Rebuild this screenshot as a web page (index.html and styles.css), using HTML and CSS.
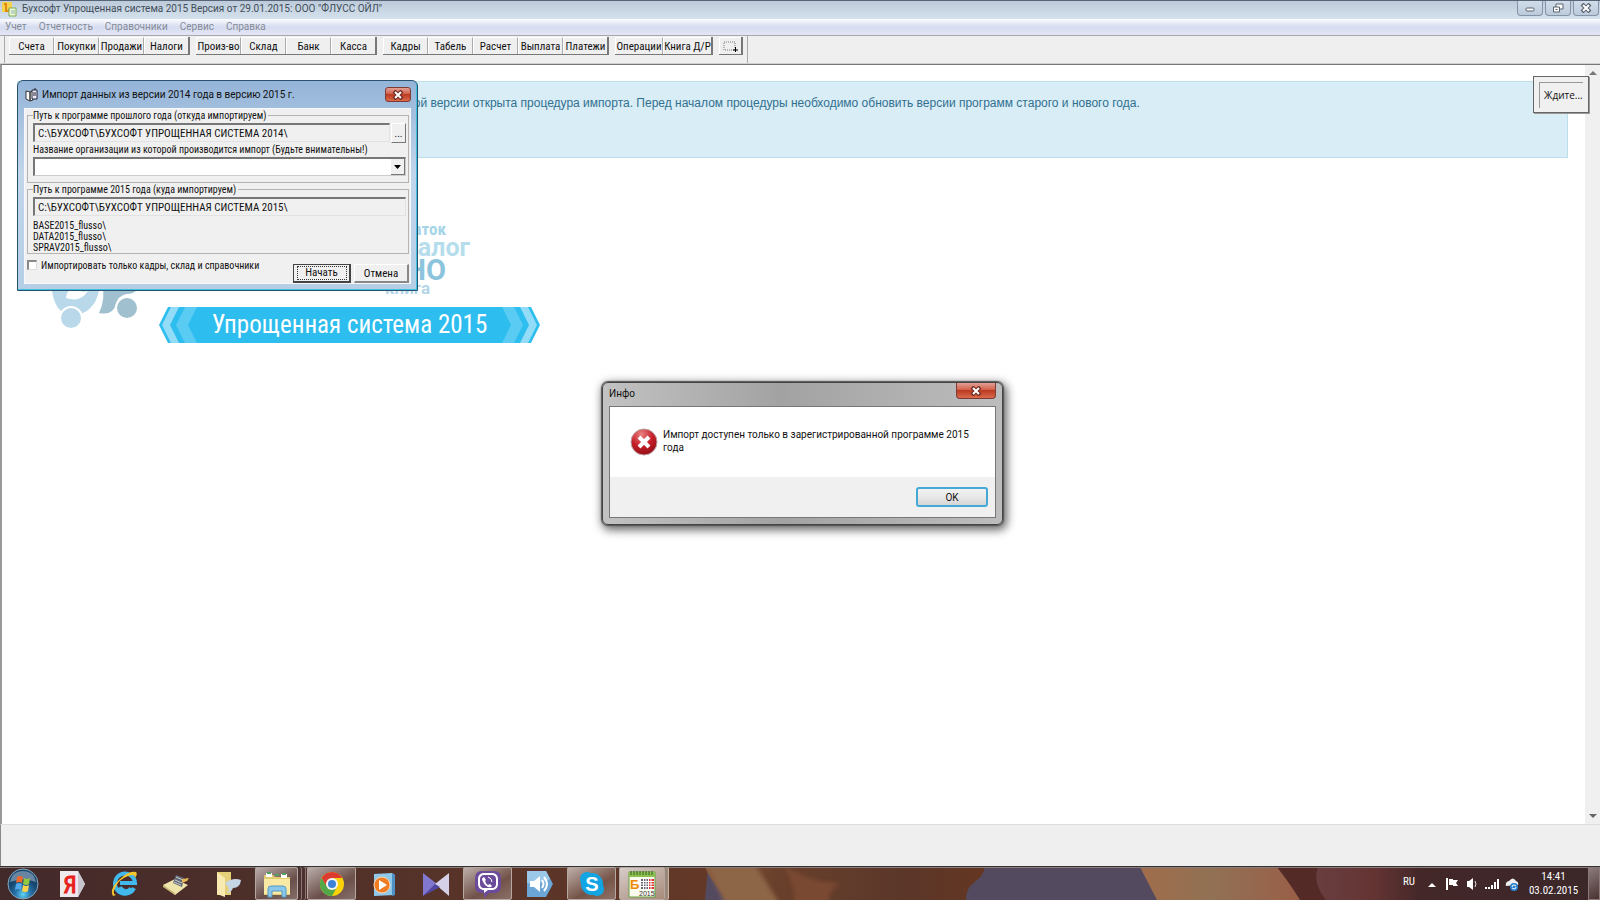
FILE: index.html
```html
<!DOCTYPE html>
<html lang="ru">
<head>
    <meta charset="UTF-8">
    <meta name="viewport" content="width=device-width, initial-scale=1.0">
    <title>Бухсофт Упрощенная система 2015</title>
    <link rel="stylesheet" href="styles.css">
</head>
<body>
    <header class="titlebar">
        <svg class="app-icon" viewBox="0 0 16 16">
            <path d="M1 1h10v10H1z" fill="#f6d24a"/>
            <path d="M3 3h2v7h3V8" fill="none" stroke="#e08a10" stroke-width="2"/>
            <path d="M8 7h7v8H8z" fill="#eef6dc" stroke="#7fae4c"/>
            <path d="M10 10h4M10 12h4" stroke="#8fb7a0"/>
        </svg>
        <span class="title">Бухсофт Упрощенная система 2015 Версия от 29.01.2015: ООО "ФЛУСС ОЙЛ"</span>
        <div class="window-buttons">
            <button aria-label="Свернуть"><svg viewBox="0 0 12 10"><rect x="2" y="5" width="8" height="3" rx="1" fill="#fff" stroke="#59636e"/></svg></button>
            <button aria-label="Восстановить"><svg viewBox="0 0 12 10"><path d="M4 1h7v5H4z" fill="#fff" stroke="#59636e"/><path d="M1.500 4h6v5h-6z" fill="#fff" stroke="#59636e"/><path d="M3.500 6h2v1h-2z" fill="#59636e"/></svg></button>
            <button aria-label="Закрыть"><svg viewBox="0 0 12 10"><path d="M2 1l8 8M10 1L2 9" stroke="#59636e" stroke-width="4"/><path d="M3 2l6 6M9 2L3 8" stroke="#fff" stroke-width="2"/></svg></button>
        </div>
    </header>

    <nav class="menu">
        <a href="#">Учет</a>
        <a href="#">Отчетность</a>
        <a href="#">Справочники</a>
        <a href="#">Сервис</a>
        <a href="#">Справка</a>
    </nav>

    <div class="toolbar">
        <div class="group">
            <button>Счета</button><button>Покупки</button><button>Продажи</button><button>Налоги</button>
        </div>
        <div class="group">
            <button>Произ-во</button><button>Склад</button><button>Банк</button><button>Касса</button>
        </div>
        <div class="group">
            <button>Кадры</button><button>Табель</button><button>Расчет</button><button>Выплата</button><button>Платежи</button>
        </div>
        <div class="group wide">
            <button>Операции</button><button>Книга Д/Р</button>
        </div>
        <div class="group single">
            <button aria-label="Выделить"><svg viewBox="0 0 18 14"><path d="M2 3h11v8H2z" fill="none" stroke="#777" stroke-dasharray="1 1"/><path d="M11 11h5M13.500 8v5" stroke="#000"/></svg></button>
        </div>
    </div>

    <main class="workspace">
        <div class="page">
            <div class="notice">Для пользователей новой версии открыта процедура импорта. Перед началом процедуры необходимо обновить версии программ старого и нового года.</div>
            <div class="logo">
                <svg class="figures" viewBox="0 0 110 120">
                    <path d="M2 65q14 14 34 8h24q-2 28-24 32-20 2-24-24Q4 78 2 65z" fill="#b9d9ea"/>
                    <path d="M62 70h38q0 14-14 14-8 2-10 10-3 12-17 9 7-14 3-33z" fill="#a0c0d0"/>
                    <path d="M26 88q0-9 10-9 6 4 12 2-8 12-22 7z" fill="#fff"/>
                    <circle cx="31" cy="108" r="12" fill="#fff"/>
                    <circle cx="31" cy="108" r="10" fill="#b9d9ea"/>
                    <circle cx="87" cy="98" r="12" fill="#fff"/>
                    <circle cx="87" cy="98" r="10" fill="#a0c0d0"/>
                </svg>
                <div class="words">
                    <span class="w-rest">остаток</span>
                    <span class="w-tax">налог</span>
                    <span class="w-no">НО</span>
                    <span class="w-book">книга</span>
                </div>
            </div>
            <div class="banner">
                <svg viewBox="0 0 381 36" preserveAspectRatio="none">
                    <path d="M9 0h363l9 18-9 18H9L0 18z" fill="#2dbdee"/>
                    <path d="M12 0h8l-9 18 9 18h-8L3 18zM369 0h-8l9 18-9 18h8l9-18z" fill="#93dcf8"/>
                    <path d="M26 0h12l-9 18 9 18H26l-9-18zM355 0h-12l9 18-9 18h12l9-18z" fill="#5accf3"/>
                </svg>
                <span>Упрощенная система 2015</span>
            </div>
        </div>
        <div class="scrollbar">
            <svg viewBox="0 0 8 5"><path d="M0 5l4-4 4 4z" fill="#777"/></svg>
            <svg viewBox="0 0 8 5"><path d="M0 0h8L4 4z" fill="#666"/></svg>
        </div>

        <div class="wait"><span>Ждите...</span></div>

        <form class="import-dialog">
            <div class="dialog-title">
                <svg viewBox="0 0 14 14">
                    <path d="M1 3l4 1v9L1 11zM5 4l3-1v9l-3 1z" fill="#fff" stroke="#333"/>
                    <path d="M7 2h5v9H7z" fill="#eef" stroke="#223"/>
                    <path d="M8 5h3M8 7h3M9 1h2" stroke="#223"/>
                </svg>
                <span>Импорт данных из версии 2014 года в версию 2015 г.</span>
                <button type="button" class="close" aria-label="Закрыть"><svg viewBox="0 0 12 10"><path d="M2 1l8 8M10 1L2 9" stroke="#6e2820" stroke-width="4"/><path d="M3 2l6 6M9 2L3 8" stroke="#fff" stroke-width="2"/></svg></button>
            </div>
            <div class="import-body">
                <fieldset class="source">
                    <legend>Путь к программе прошлого года (откуда импортируем)</legend>
                    <div class="path-row">
                        <input class="path" type="text" aria-label="Путь к программе прошлого года" value="C:\БУХСОФТ\БУХСОФТ УПРОЩЕННАЯ СИСТЕМА 2014\" readonly>
                        <button type="button" class="browse">...</button>
                    </div>
                    <label for="org">Название организации из которой производится импорт (Будьте внимательны!)</label>
                    <div class="combo">
                        <select id="org"><option></option></select>
                        <svg viewBox="0 0 13 15"><path d="M3 6h7l-3.500 4z" fill="#000"/></svg>
                    </div>
                </fieldset>
                <fieldset class="target">
                    <legend>Путь к программе 2015 года (куда импортируем)</legend>
                    <input class="path" type="text" aria-label="Путь к программе 2015 года" value="C:\БУХСОФТ\БУХСОФТ УПРОЩЕННАЯ СИСТЕМА 2015\" readonly>
                    <div class="folders">BASE2015_flusso\<br>DATA2015_flusso\<br>SPRAV2015_flusso\</div>
                </fieldset>
                <div class="import-footer">
                    <input type="checkbox" id="only">
                    <label for="only">Импортировать только кадры, склад и справочники</label>
                    <button type="button" class="start"><span>Начать</span></button>
                    <button type="button" class="cancel">Отмена</button>
                </div>
            </div>
        </form>

        <div class="info-dialog" role="alertdialog">
            <div class="dialog-title">
                <span>Инфо</span>
                <button class="close" aria-label="Закрыть"><svg viewBox="0 0 12 10"><path d="M2 1l8 8M10 1L2 9" stroke="#6e2820" stroke-width="4"/><path d="M3 2l6 6M9 2L3 8" stroke="#fff" stroke-width="2"/></svg></button>
            </div>
            <div class="info-body">
                <div class="message">
                    <svg viewBox="0 0 28 28">
                        <defs><radialGradient id="red" cx=".4" cy=".2" r=".9"><stop offset="0" stop-color="#e98080"/><stop offset=".5" stop-color="#c51f28"/><stop offset="1" stop-color="#8c0a14"/></radialGradient></defs>
                        <circle cx="14" cy="14" r="13" fill="url(#red)" stroke="#b9a0a0"/>
                        <path d="M9 9l10 10M19 9L9 19" stroke="#fff" stroke-width="4"/>
                    </svg>
                    <p>Импорт доступен только в зарегистрированной программе 2015 года</p>
                </div>
                <div class="actions"><button>OK</button></div>
            </div>
        </div>
    </main>

    <div class="statusbar"></div>

    <footer class="taskbar">
        <svg class="wallpaper" viewBox="0 0 1600 34" preserveAspectRatio="none">
            <defs>
                <linearGradient id="left"><stop offset="0" stop-color="#42292a"/><stop offset=".4" stop-color="#4f302a"/><stop offset="1" stop-color="#633827"/></linearGradient>
                <linearGradient id="tan"><stop offset="0" stop-color="#a06d4b"/><stop offset=".4" stop-color="#917154"/><stop offset="1" stop-color="#9b5a45"/></linearGradient>
                <linearGradient id="right"><stop offset="0" stop-color="#6c4448"/><stop offset=".3" stop-color="#643433"/><stop offset=".45" stop-color="#432729"/><stop offset="1" stop-color="#3b2729"/></linearGradient>
                <linearGradient id="mid"><stop offset="0" stop-color="#8b5a3d"/><stop offset=".25" stop-color="#69402b"/><stop offset=".7" stop-color="#5b372a"/><stop offset="1" stop-color="#643621"/></linearGradient>
                <filter id="soft" x="0" y="0" width="1" height="1"><feGaussianBlur stdDeviation="2"/></filter>
            </defs>
            <path d="M0 0h1600v34H0z" fill="#544a60"/>
            <path d="M0 0h708l-3 34H0z" fill="url(#left)"/>
            <path d="M705 0h280q-2 10-11 16-8 6-8 18H728q-16-18-23-34z" fill="url(#mid)"/>
            <g filter="url(#soft)">
                <path d="M705-6h48l28 46h-55z" fill="#8d6547"/>
                <path d="M780-6q20 20 60 23-14 8-10 23h-35q0-26-15-46z" fill="#7a4a31"/>
            </g>
            <path d="M1140 0h180v34h-163z" fill="url(#tan)"/>
            <path d="M1277 0h323v34h-298z" fill="url(#right)"/>
            <path d="M1277 0h41q-6 16 8 34h-26q-12-20-23-34z" fill="#532a25"/>
        </svg>
        <div class="tasks">
            <button class="start-orb" aria-label="Пуск"><svg viewBox="0 0 32 32">
                <defs><radialGradient id="orb" cy=".85"><stop offset="0" stop-color="#5ed5f5"/><stop offset=".5" stop-color="#2874ab"/><stop offset="1" stop-color="#17466f"/></radialGradient></defs>
                <circle cx="16" cy="16" r="15" fill="url(#orb)" stroke="#86a9bd"/>
                <path d="M3 14Q5 3 16 3t13 11q-13-5-26 0z" fill="#fff" opacity=".35"/>
                <path d="M10 9q3-2 6 0l-1 6q-3-2-6 0z" fill="#f0672c"/><path d="M17 10q3 2 6 0l-1 6q-3 2-6 0z" fill="#92c83e"/>
                <path d="M9 16q3-2 6 0l-1 6q-3-2-6 0z" fill="#52a8e8"/><path d="M16 17q3 2 6 0l-1 6q-3 2-6 0z" fill="#fdd24a"/>
            </svg></button>
            <button aria-label="Яндекс"><svg viewBox="0 0 28 28"><path d="M2 1h18l7 13-7 13H2z" fill="#eee9ec"/><path d="M20 1l7 13-7 13z" fill="#c9c5cc"/><text x="12" y="23" text-anchor="middle" class="ya">Я</text></svg></button>
            <button aria-label="Internet Explorer"><svg viewBox="0 0 28 28">
                <path d="M24 18a10 10 0 1 1 1-5H10M10 17q2 5 7 4 3 0 4-3" fill="none" stroke="#42b9ec" stroke-width="4"/>
                <path d="M3 26q-4-7 6-16Q19 0 26 2q2 2-1 6 0-5-7-2Q9 9 5 18q-3 6 1 7z" fill="#f7c52c"/>
            </svg></button>
            <button aria-label="Документы"><svg viewBox="0 0 28 28"><path d="M1 15l12-6 13 6-13 10z" fill="#efe4ac"/><path d="M1 15l12 8v2L1 17z" fill="#c9b978"/><path d="M14 5l8 3-2 9-9-4z" fill="#626873"/><path d="M14 7l7 3M13 10l7 3M12 12l7 3" stroke="#c8ccd4"/><path d="M20 9l7-1-2 3-5 2z" fill="#e7b65a"/></svg></button>
            <button aria-label="Папка"><svg viewBox="0 0 28 28"><path d="M3 2h14v23H3z" fill="#e6cf79"/><path d="M3 2l8 6v19l-8-3z" fill="#f8eab0"/><path d="M11 13q8-6 16-3-1 8-8 8-2 5-6 5 3-3 1-6z" fill="#c5d7e4"/></svg></button>
            <button class="open stack" aria-label="Проводник"><svg viewBox="0 0 28 28"><path d="M1 5h9l2 2h15v18H1z" fill="#e2cb70"/><path d="M3 3h6v4H3zM18 4h6v4h-6z" fill="#fff"/><path d="M4 3h4M12 5h4M19 4h4" stroke="#50a060" stroke-width="2"/><path d="M1 9h26v15H1z" fill="#f8e9a4"/><path d="M5 27v-8q0-3 3-3h12q3 0 3 3v8h-4v-6H9v6z" fill="#8ac8eb" stroke="#5699c4"/></svg></button>
            <button class="open" aria-label="Chrome"><svg viewBox="0 0 28 28"><circle cx="14" cy="14" r="12" fill="#fbd20a"/><path d="M3.600 8A12 12 0 0 1 24.400 8H14z" fill="#dc3b30"/><path d="M14 8H3.600l5.200 9z" fill="#dc3b30"/><path d="M3.600 8A12 12 0 0 0 14 26l5-9-10 0z" fill="#52a849"/><circle cx="14" cy="14" r="6" fill="#f4f4f4"/><circle cx="14" cy="14" r="4" fill="#3e82d8"/></svg></button>
            <button aria-label="Проигрыватель"><svg viewBox="0 0 28 28"><path d="M4 4l18-1 3 2v20l-21 1z" fill="#8fc8e9"/><path d="M22 3l3 2v20l-3 1z" fill="#4e91c4"/><circle cx="12" cy="15" r="8" fill="#ef7d24" stroke="#fbd6b4"/><path d="M9 10l8 5-8 5z" fill="#fff"/></svg></button>
            <button aria-label="Плеер"><svg viewBox="0 0 28 28"><path d="M1 3l14 11L1 26z" fill="#8277ce"/><path d="M27 3L13 14l14 12z" fill="#d5cfe8"/><path d="M1 26l12-12 5 3z" fill="#5346a3"/></svg></button>
            <button class="open" aria-label="Viber"><svg viewBox="0 0 28 28"><path d="M7 1h14q6 1 6 7v8q0 6-6 7h-6l-5 5v-5H7q-6-1-6-7V8q0-6 6-7z" fill="#6b4b9c"/><path d="M9 3h10q5 1 5 6v5q0 5-5 6h-5l-4 3v-3H9q-5-1-5-6V9q0-5 5-6z" fill="#fff"/><path d="M9 5h10q3 1 3 4v5q0 3-3 4H9q-3-1-3-4V9q0-3 3-4z" fill="#6b4b9c"/><path d="M10 7l2 3-1 1q1 3 3 4l2-1 2 2q-1 2-4 1-5-3-6-8 0-1 2-2z" fill="#fff"/><path d="M14 7q4 1 4 5" fill="none" stroke="#fff"/></svg></button>
            <button aria-label="Звук"><svg viewBox="0 0 28 28"><path d="M1 1h19l7 13-7 13H1z" fill="#6ba6d6"/><path d="M1 1h19l4 8Q12 15 1 13z" fill="#9bc8e8"/><path d="M4 11h4l6-5v16l-6-5H4z" fill="#fff"/><path d="M16 10q3 4 0 8M18 7q6 7 0 14" fill="none" stroke="#fff" stroke-width="2"/></svg></button>
            <button class="open" aria-label="Skype"><svg viewBox="0 0 28 28"><circle cx="14" cy="14" r="11" fill="#12a5e4"/><circle cx="9" cy="9" r="7" fill="#12a5e4"/><circle cx="19" cy="19" r="7" fill="#12a5e4"/><text x="14" y="21" text-anchor="middle" class="sk">S</text></svg></button>
            <button class="open active" aria-label="Бухсофт"><svg viewBox="0 0 28 28"><path d="M1 2h26v25H1z" fill="#fbfbf0" stroke="#67a043"/><path d="M1 2h26v5H1z" fill="#8cc152"/><path d="M3 1v4M6 1v4M9 1v4M12 1v4M15 1v4M18 1v4M21 1v4M24 1v4" stroke="#375e21"/><text x="2" y="19" class="bs">Б</text><path d="M13 9h8v10h-8z" fill="#667"/><path d="M21 9h5v10h-5z" fill="#d33"/><path d="M12 11.500h14M12 14h14M12 16.500h14M15.500 9v10M18 9v10M20.500 9v10M23 9v10" stroke="#fff"/><text x="11" y="26" class="yr">2015</text></svg></button>
        </div>
        <div class="tray">
            <span class="lang">RU</span>
            <svg viewBox="0 0 14 14"><path d="M3 10l4-4 4 4z" fill="#fff"/></svg>
            <svg viewBox="0 0 14 14"><path d="M2 1v12" stroke="#fff" stroke-width="2"/><path d="M4 2h4v1h5l-2 3 2 3H8V8H4z" fill="#fff"/></svg>
            <svg viewBox="0 0 14 14"><path d="M2 4h2l4-3v12l-4-3H2z" fill="#fff"/><path d="M10 4q2 3 0 6" fill="none" stroke="#ddd"/></svg>
            <svg viewBox="0 0 14 14"><path d="M1 12v-2M4 12v-2M7 12V8M10 12V5M13 12V2" stroke="#fff" stroke-width="2"/></svg>
            <svg viewBox="0 0 14 14"><path d="M1 9q-1-4 3-5 4-5 7 0 3 1 2 4z" fill="#eee"/><circle cx="9" cy="10" r="4" fill="#287fd0"/><path d="M7 10q0-2 2-2l2 1M11 10q0 2-2 2l-2-1" fill="none" stroke="#fff"/></svg>
            <div class="clock"><span>14:41</span><span>03.02.2015</span></div>
            <button class="show-desktop" aria-label="Показать рабочий стол"></button>
        </div>
    </footer>
</body>
</html>
```
FILE: styles.css
```css
* {
    box-sizing: border-box;
}
body {
    margin: 0;
    height: 100vh;
    display: flex;
    flex-direction: column;
    overflow: hidden;
    background: #efefef;
    font-family: "Roboto Condensed", "Liberation Sans Narrow", sans-serif;
    font-size: 11px;
    color: #111;
}
button, input, select {
    font: inherit;
    color: inherit;
    padding: 0;
    margin: 0;
}
button {
    display: flex;
    align-items: center;
    justify-content: center;
    border: none;
    background: none;
    white-space: nowrap;
}
svg {
    display: block;
    flex: none;
}

/* main window frame */
.titlebar {
    display: flex;
    height: 19px;
    flex: none;
    gap: 5px;
    padding-left: 1px;
    border-top: 1px solid #566578;
    background: linear-gradient(#bccada, #d5e2ed);
    font: 10px/16px Roboto, sans-serif;
    color: #414c58;
}
.app-icon {
    width: 16px;
    height: 16px;
}
.title {
    flex: 1;
}
.window-buttons {
    display: flex;
    gap: 2px;
    padding-right: 1px;
}
.window-buttons button {
    width: 26px;
    height: 15px;
    border: 1px solid #8494a6;
    border-top: none;
    border-radius: 0 0 4px 4px;
    background: linear-gradient(#d1dce8, #bccbdc);
}
.window-buttons svg, .close svg {
    width: 12px;
    height: 10px;
}
.menu {
    display: flex;
    flex: none;
    gap: 12px;
    height: 16px;
    padding-left: 5px;
    background: linear-gradient(#fbfcfe, #d5dcf0 50%, #e4e6f4);
    font: 10px/15px Roboto, sans-serif;
}
.menu a {
    color: #858b98;
    text-decoration: none;
}
.toolbar {
    display: flex;
    flex: none;
    gap: 6px;
    align-items: flex-start;
    height: 29px;
    padding: 1px 0 0 9px;
    border-top: 1px solid #a6a8b0;
    border-bottom: 1px solid #d0d0d0;
    background: linear-gradient(90deg, transparent 4px, #aaa 4px, #aaa 5px, transparent 5px, transparent 747px, #aaa 747px, #aaa 748px, transparent 748px);
}
.group {
    display: flex;
    border-right: 2px solid #777;
    border-bottom: 1px solid #777;
}
.group button {
    width: 45px;
    height: 17px;
    border-top: 1px solid #fff;
    border-left: 1px solid #fff;
    border-right: 1px solid #aaa;
}
.group button:last-child {
    width: 44px;
    border-right: none;
}
.group.wide button {
    width: 48px;
}
.group.single button {
    width: 22px;
}
.group svg {
    width: 18px;
    height: 14px;
}

/* working area */
.workspace {
    position: relative;
    flex: 1;
    min-height: 0;
    display: flex;
    border-top: 1px solid #777;
    border-left: 2px solid #999;
    background: #fff;
}
.page {
    flex: 1;
    padding: 16px 17px 0 15px;
}
.notice {
    height: 77px;
    padding: 13px 0 0 15px;
    border: 1px solid #bcdfeb;
    background: #d9edf7;
    color: #31708f;
    font: 12px/16px "Liberation Sans", Arial, sans-serif;
    white-space: nowrap;
    text-indent: 250px;
}
.logo {
    display: flex;
    gap: 220px;
    height: 149px;
    padding: 52px 0 0 23px;
}
.figures {
    width: 110px;
    height: 120px;
}
.words {
    display: flex;
    flex-direction: column;
    width: 100px;
    padding-top: 10px;
    font-family: Roboto, sans-serif;
    font-weight: bold;
    color: #a5d5e8;
}
.w-rest {
    align-self: flex-end;
    padding-right: 24px;
    font-family: "Roboto Condensed", sans-serif;
    font-size: 17px;
    line-height: 18px;
}
.w-tax {
    align-self: flex-end;
    font-size: 25px;
    line-height: 20px;
    color: #b5ddec;
}
.w-no {
    align-self: flex-end;
    padding-right: 24px;
    font-size: 29px;
    line-height: 24px;
    color: #8dc4dd;
}
.w-book {
    padding-left: 15px;
    font-size: 17px;
    line-height: 12px;
    color: #b5d5e8;
}
.banner {
    position: relative;
    width: 381px;
    height: 36px;
    margin-left: 142px;
    color: #fff;
    font: 25px/36px "Roboto Condensed", "Liberation Sans Narrow", sans-serif;
    text-align: center;
    white-space: nowrap;
}
.banner svg {
    position: absolute;
    width: 100%;
    height: 100%;
}
.banner span {
    position: relative;
}
.scrollbar {
    width: 15px;
    display: flex;
    flex-direction: column;
    justify-content: space-between;
    align-items: center;
    padding: 5px 0;
    background: #f0f0f0;
}
.scrollbar svg {
    width: 8px;
    height: 5px;
}
.wait {
    position: absolute;
    top: 11px;
    right: 11px;
    width: 56px;
    height: 37px;
    padding: 5px;
    border: 1px solid #666;
    background: #f0f0f0;
    box-shadow: 1px 1px 0 #999;
    font: 10px/25px "Open Sans", sans-serif;
}
.wait span {
    display: block;
    padding-left: 4px;
    border-top: 1px solid #999;
    border-left: 1px solid #999;
    white-space: nowrap;
}

/* import dialog */
.import-dialog {
    position: absolute;
    top: 15px;
    left: 15px;
    width: 401px;
    padding: 0 6px 6px;
    border: 1px solid #27536e;
    border-radius: 6px 6px 0 0;
    background: linear-gradient(#94b4d8, #c2d6eb 45%, #b5cee6);
    box-shadow: inset -1px -1px 0 #40c0e0;
}
.dialog-title {
    display: flex;
    font: 10px/28px Roboto, sans-serif;
}
.import-dialog .dialog-title {
    height: 27px;
    gap: 3px;
    padding-left: 1px;
}
.import-dialog .dialog-title > svg {
    width: 14px;
    height: 14px;
    margin-top: 7px;
}
.dialog-title span {
    flex: 1;
}
.close {
    width: 26px;
    height: 15px;
    margin-top: 6px;
    border: 1px solid #7d3b36;
    border-radius: 3px;
    background: linear-gradient(#e3a093, #cf5a43 50%, #bb3a22 50%, #d96a4c);
}
.import-body {
    padding: 0 1px 0 2px;
    height: 176px;
    border: 1px solid #f5f8fc;
    background: #f0f0f0;
    font-size: 10px;
}
fieldset {
    min-width: 0;
    margin: 0;
    padding: 1px 2px 0 5px;
    border: 1px solid #b4b4b4;
}
legend {
    height: 13px;
    padding: 0 2px 0 0;
    line-height: 13px;
}
.source {
    height: 74px;
}
.target {
    height: 71px;
}
.path-row {
    display: flex;
    gap: 1px;
}
.path {
    display: block;
    width: 100%;
    height: 19px;
    padding-left: 3px;
    border: 1px solid #e2e2e2;
    border-top: 2px solid #777;
    border-left: 2px solid #777;
    background: #f0f0f0;
    font-size: 11px;
}
.browse {
    flex: none;
    width: 15px;
    height: 20px;
    border: 1px solid #fff;
    border-right-color: #777;
    border-bottom-color: #777;
}
.source label {
    display: block;
    line-height: 14px;
    white-space: nowrap;
}
.combo {
    position: relative;
}
.combo select {
    display: block;
    width: 100%;
    height: 19px;
    border: 1px solid #ccc;
    border-top: 2px solid #777;
    border-left: 2px solid #777;
    border-radius: 0;
    background: #fff;
    appearance: none;
}
.combo svg {
    position: absolute;
    top: 2px;
    right: 1px;
    width: 14px;
    height: 16px;
    border-right: 1px solid #777;
    border-bottom: 1px solid #777;
    background: #f0f0f0;
}
.folders {
    padding-top: 4px;
    line-height: 11px;
}
.import-footer {
    display: flex;
    align-items: flex-start;
    padding-top: 6px;
}
.import-footer input {
    width: 10px;
    height: 10px;
    appearance: none;
    border: 1px solid #ddd;
    border-top: 2px solid #888;
    border-left: 2px solid #888;
    background: #fff;
}
.import-footer label {
    flex: 1;
    padding-left: 4px;
    line-height: 12px;
    white-space: nowrap;
}
.import-footer button {
    width: 55px;
    height: 19px;
    margin-top: 4px;
    border: 1px solid #fff;
    border-right: 2px solid #888;
    border-bottom: 2px solid #888;
    font-size: 11px;
}
.import-footer .start {
    width: 58px;
    margin-right: 3px;
    border: 1px solid #444;
    border-right-width: 2px;
    border-bottom-width: 2px;
}
.start span {
    width: 50px;
    line-height: 12px;
    border: 1px dotted #333;
}

/* message box */
.info-dialog {
    position: absolute;
    top: 317px;
    left: calc(50% - 199px);
    width: 401px;
    padding: 0 6px 6px;
    border: 1px solid #444;
    border-radius: 6px;
    background: linear-gradient(90deg, #c2c2c2, #a2a2a2 45%, #bdbdbd);
    box-shadow: 0 0 1px 1px #555, 2px 3px 10px 2px rgba(0, 0, 0, 0.6);
}
.info-dialog .dialog-title {
    height: 23px;
    line-height: 22px;
}
.info-dialog .close {
    width: 40px;
    height: 16px;
    margin-top: 0;
    border-top: none;
    border-radius: 0 0 4px 4px;
}
.info-body {
    border: 1px solid #777;
    background: #fff;
    font-family: Roboto, sans-serif;
    font-size: 10px;
}
.message {
    display: flex;
    gap: 5px;
    height: 70px;
    padding: 21px 20px 0;
}
.message svg {
    width: 28px;
    height: 28px;
}
.message p {
    margin: 0;
    line-height: 13px;
}
.actions {
    display: flex;
    justify-content: flex-end;
    height: 40px;
    padding: 10px 7px;
    background: #f0f0f0;
}
.actions button {
    width: 72px;
    height: 20px;
    border: 2px solid #44a9d4;
    border-radius: 3px;
    background: linear-gradient(#f2f2f2, #e8e8e8 50%, #d5d5d5);
}
.statusbar {
    flex: none;
    height: 42px;
    border-top: 1px solid #ddd;
    border-left: 1px solid #888;
    background: #efefef;
}

/* taskbar */
.taskbar {
    position: relative;
    flex: none;
    display: flex;
    justify-content: space-between;
    height: 34px;
    border-top: 1px solid #333;
    box-shadow: inset 0 1px 0 #8c7b78;
}
.wallpaper {
    position: absolute;
    width: 100%;
    height: 100%;
    z-index: -1;
}
.tasks, .tray {
    display: flex;
}
.tasks button {
    width: 49px;
    margin-right: 3px;
}
.tasks svg {
    width: 28px;
    height: 28px;
}
.tasks .start-orb {
    width: 45px;
    margin-right: 2px;
}
.tasks .start-orb svg {
    width: 32px;
    height: 32px;
}
.tasks .open {
    border: 1px solid #b5a8a3;
    border-radius: 2px;
    background: linear-gradient(150deg, rgba(255, 255, 255, 0.6), rgba(255, 255, 255, 0.15) 60%, rgba(255, 255, 255, 0.3));
}
.tasks .stack {
    width: 43px;
    margin-right: 9px;
    box-shadow: 3px 0 0 #4b3230, 4px 0 0 #8a7774, 7px 0 0 #4b3230, 8px 0 0 #8a7774;
}
.tasks .active {
    width: 46px;
    background: linear-gradient(150deg, rgba(255, 255, 255, 0.75), rgba(255, 240, 220, 0.45));
    box-shadow: 3px 0 0 #9c8878, 4px 0 0 #c8b8a8;
}
.ya {
    font: 24px "Roboto Condensed", sans-serif;
    fill: #e8201c;
    stroke: #e8201c;
}
.sk {
    font: bold 20px "Liberation Sans", sans-serif;
    fill: #fff;
}
.bs {
    font: bold 13px "Liberation Sans", sans-serif;
    fill: #ee8a00;
}
.yr {
    font: 7px "Liberation Sans", sans-serif;
    fill: #333;
}
.tray {
    align-items: center;
    gap: 6px;
    color: #fff;
    line-height: 14px;
}
.tray svg {
    width: 14px;
    height: 14px;
}
.lang {
    padding: 0 4px 4px 0;
}
.clock {
    display: flex;
    flex-direction: column;
    width: 57px;
    text-align: center;
}
.show-desktop {
    width: 12px;
    height: 33px;
    border: 1px solid #8b7979;
    background: linear-gradient(150deg, #8c7c7c, #493131);
}
```
